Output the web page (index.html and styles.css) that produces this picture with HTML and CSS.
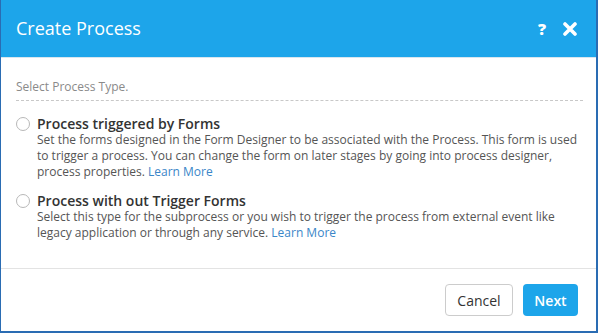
FILE: index.html
```html
<!DOCTYPE html>
<html lang="en">
<head>
  <meta charset="UTF-8" />
  <title>Create Process</title>
  <link rel="stylesheet" href="styles.css">
</head>
<body>
  <div class="modal">
    <div class="modal-header">
      <h1>Create Process</h1>
      <div class="header-icons">
        <span class="help-icon">?</span>
        <svg class="close-icon" width="14" height="14" viewBox="0 0 14 14">
          <path d="M2 2 L12 12 M12 2 L2 12" stroke="#fff" stroke-width="3.6" stroke-linecap="round" />
        </svg>
      </div>
    </div>

    <div class="modal-body">
      <div class="section-label">Select Process Type.</div>

      <label class="option">
        <input type="radio" name="ptype" />
        <span class="radio"></span>
        <div class="option-text">
          <div class="option-title">Process triggered by Forms</div>
          <div class="option-desc">
            Set the forms designed in the Form Designer to be associated with the Process. This form is used<br>
            to trigger a process. You can change the form on later stages by going into process designer,<br>
            process properties. <a href="#">Learn More</a>
          </div>
        </div>
      </label>

      <label class="option">
        <input type="radio" name="ptype" />
        <span class="radio"></span>
        <div class="option-text">
          <div class="option-title">Process with out Trigger Forms</div>
          <div class="option-desc">
            Select this type for the subprocess or you wish to trigger the process from external event like<br>
            legacy application or through any service. <a href="#">Learn More</a>
          </div>
        </div>
      </label>
    </div>

    <div class="modal-footer">
      <button class="cancel-btn">Cancel</button>
      <button class="next-btn">Next</button>
    </div>
  </div>
</body>
</html>
```

FILE: styles.css
```css
body {
  margin: 0;
  padding: 0;
  font-family: 'Open Sans', sans-serif;
  background: #fff;
}

.modal {
  width: 598px;
  height: 333px;
  box-sizing: border-box;
  border: 1px solid #2a6cb3;
  border-right-width: 2px;
  border-bottom-width: 2px;
  display: flex;
  flex-direction: column;
  background: #fff;
}

.modal-header {
  height: 57px;
  background-color: #1da5ea;
  border-bottom: 1px solid #d8e6ef;
  display: flex;
  align-items: center;
  justify-content: space-between;
  padding: 0 19px 0 15px;
  margin-top: -1px;
}

.modal-header h1 {
  margin: 0;
  color: #fff;
  font-size: 18px;
  font-weight: normal;
  padding-bottom: 2px;
}

.header-icons {
  display: flex;
  align-items: center;
  gap: 17px;
}

.help-icon {
  color: #fff;
  font-weight: 800;
  font-size: 16px;
  font-family: 'Open Sans', sans-serif;
}

.close-icon {
  display: block;
}

.modal-body {
  flex: 1;
  padding: 20px 13px 0 15px;
}

.section-label {
  font-size: 12px;
  color: #8a8a8a;
  padding-bottom: 5px;
  border-bottom: 1px dashed #c8c8c8;
  margin-bottom: 14px;
}

.option {
  display: flex;
  align-items: flex-start;
  margin-bottom: 12px;
  cursor: pointer;
}

.option input {
  display: none;
}

.radio {
  width: 12px;
  height: 12px;
  border: 1px solid #b8b8b8;
  border-radius: 50%;
  margin-top: 2px;
  margin-right: 7px;
  flex-shrink: 0;
}

.option-title {
  font-size: 14px;
  font-weight: 600;
  color: #333;
  line-height: 17px;
}

.option-desc {
  font-size: 12px;
  color: #555;
  line-height: 16px;
}

.option-desc a {
  color: #3a86c8;
  text-decoration: none;
}

.modal-footer {
  border-top: 1px solid #e3e3e3;
  height: 63px;
  box-sizing: border-box;
  display: flex;
  justify-content: flex-end;
  align-items: center;
  gap: 10px;
  padding: 0 18px 0 0;
}

.modal-footer button {
  height: 32px;
  border-radius: 4px;
  font-family: 'Open Sans', sans-serif;
  font-size: 14px;
  cursor: pointer;
}

.cancel-btn {
  width: 68px;
  background: #fff;
  border: 1px solid #ccc;
  color: #333;
}

.next-btn {
  width: 55px;
  background-color: #1da5ea;
  border: none;
  color: #fff;
  font-weight: 600;
}
```
